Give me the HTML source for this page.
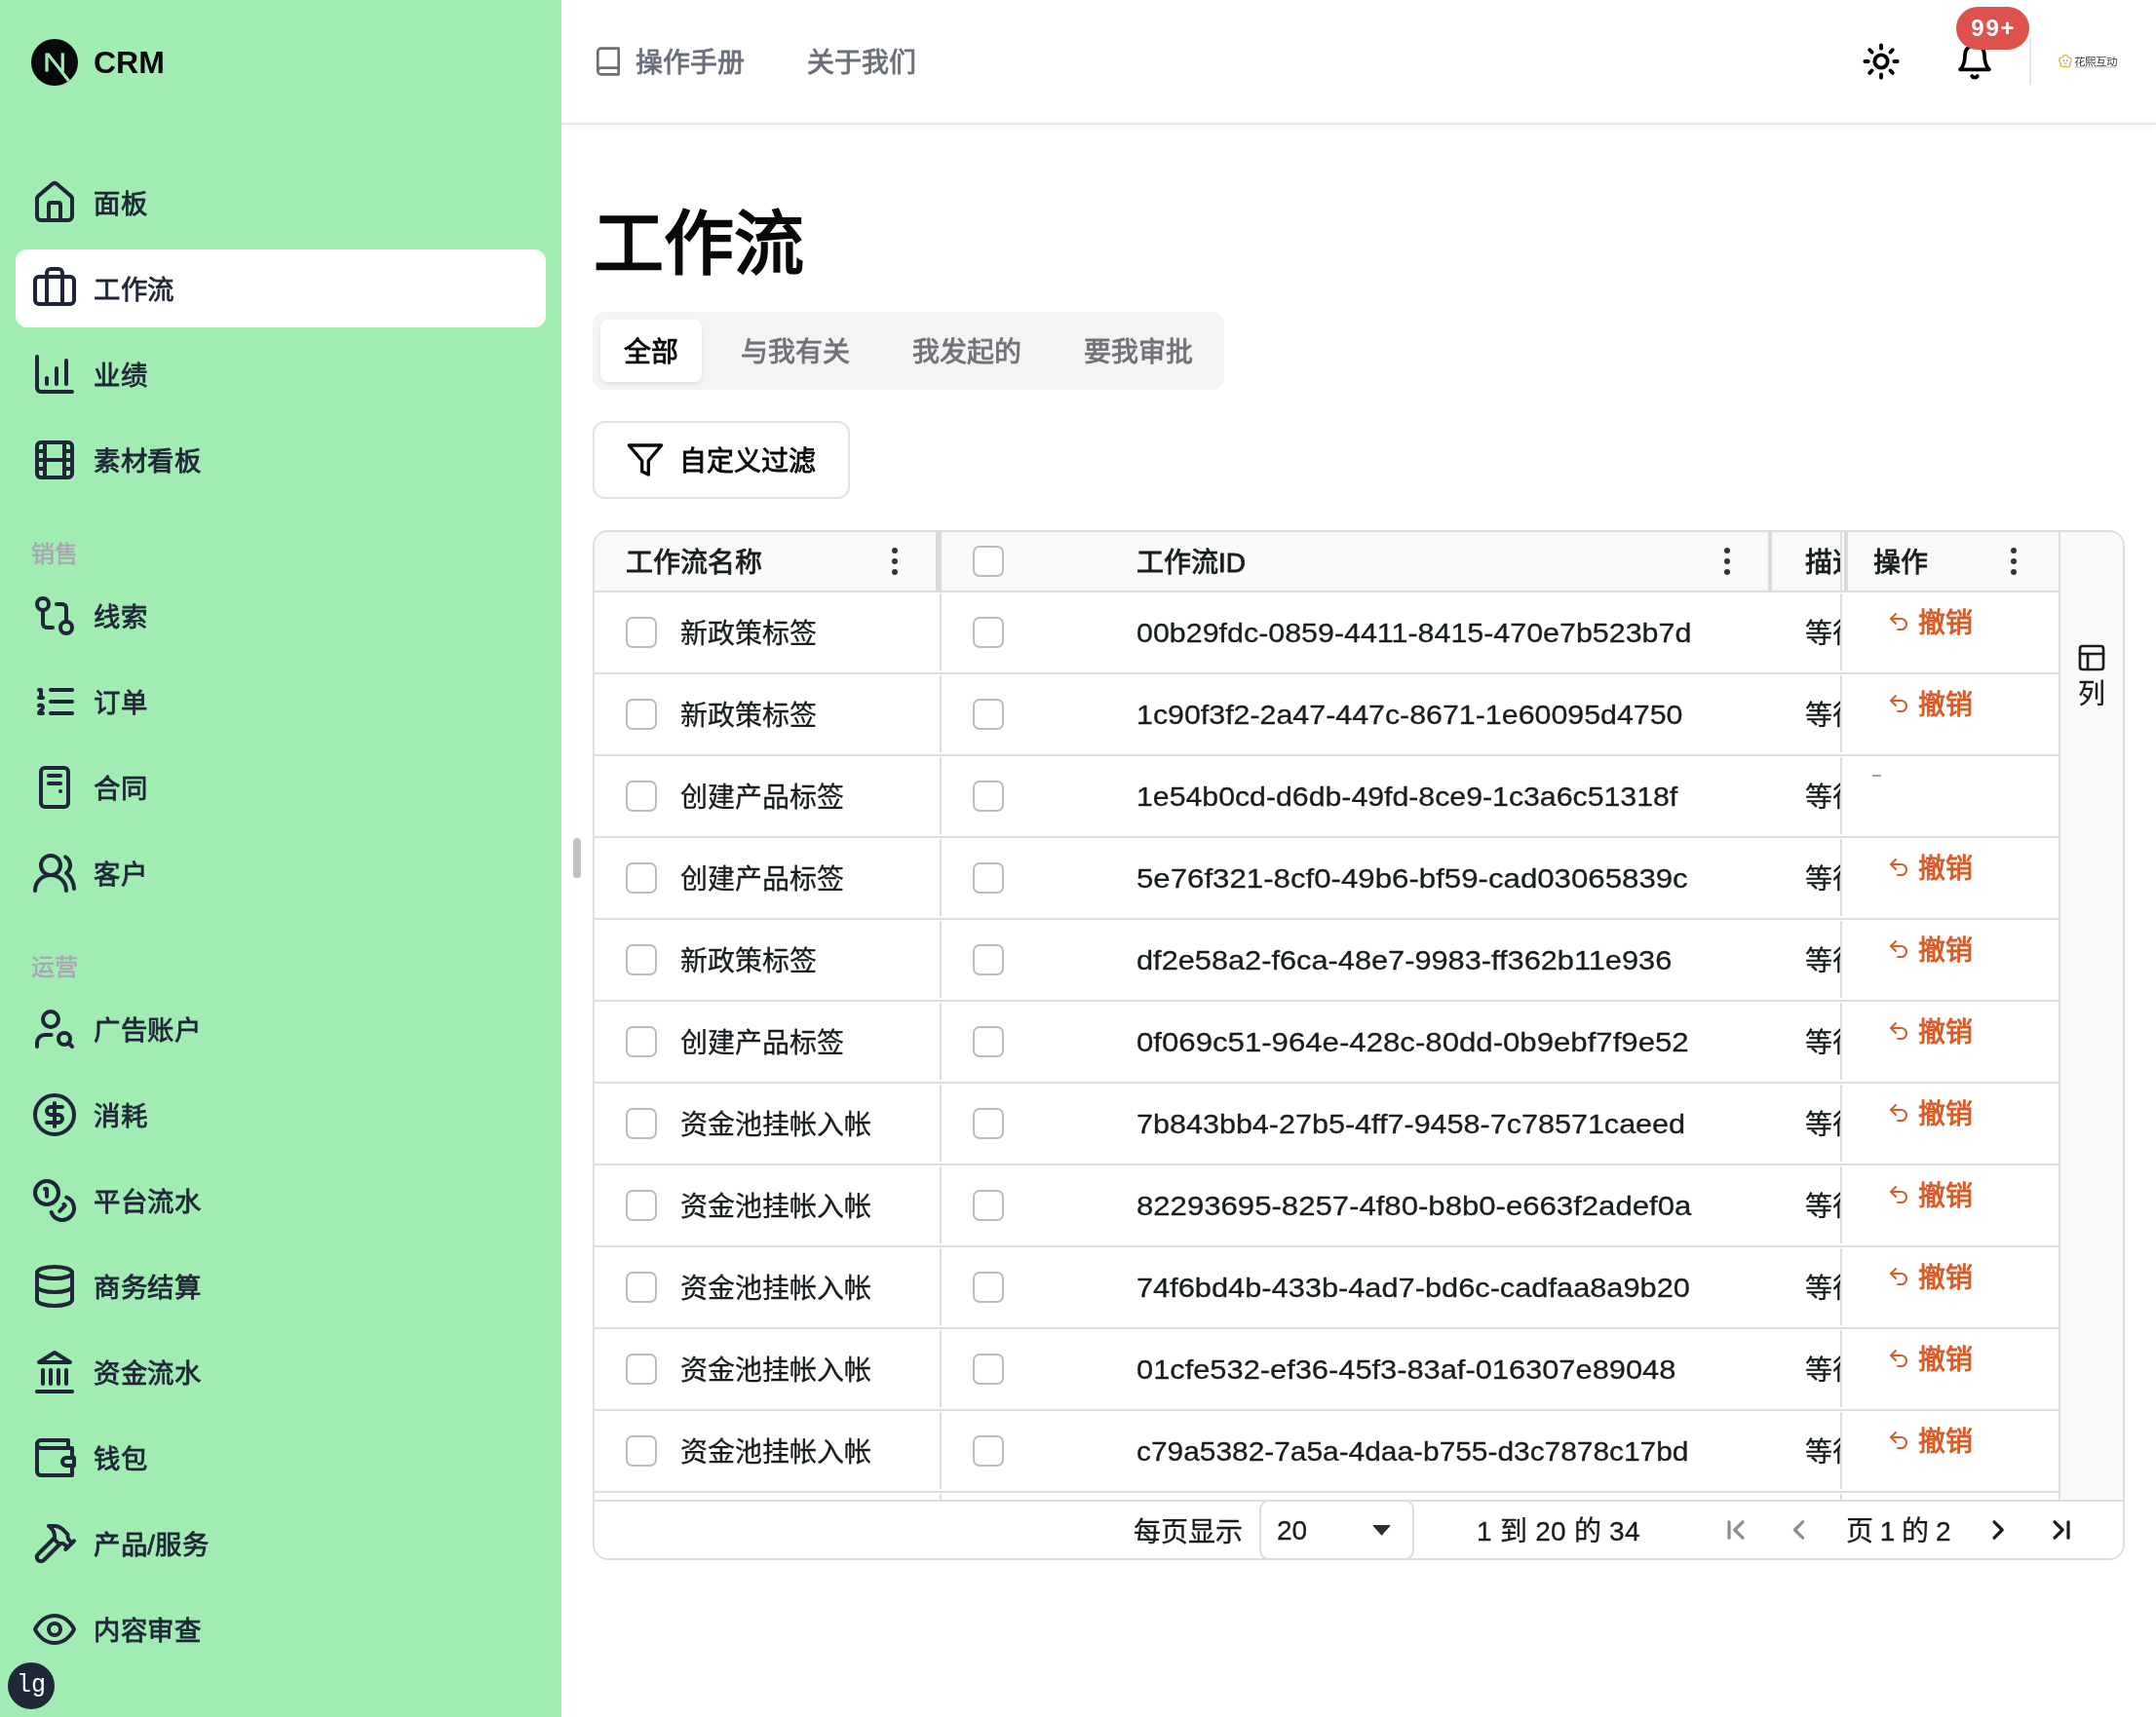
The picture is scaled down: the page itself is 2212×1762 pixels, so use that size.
<!DOCTYPE html>
<html lang="zh-CN">
<head>
<meta charset="utf-8">
<title>工作流 - CRM</title>
<style>
*{box-sizing:border-box}
html,body{margin:0;padding:0}
body{width:2212px;height:1762px;position:relative;overflow:hidden;background:#fff;
 font-family:"Liberation Sans",sans-serif;color:#181d1f;-webkit-font-smoothing:antialiased}
#root{position:absolute;left:0;top:0;width:2212px;height:1762px;will-change:transform}
.abs{position:absolute}
#side{position:absolute;left:0;top:0;width:576px;height:1762px;background:#a1ecb3;z-index:2}
.nav{position:absolute;left:16px;width:544px;height:80px;border-radius:12px;display:flex;align-items:center;
 padding-left:16px;color:#1f2637;font-size:28px;font-weight:500;line-height:40px}
.nav svg{flex:none;margin-right:16px}
.nav span{position:relative;top:2px;-webkit-text-stroke:.8px #1f2637;font-size:27.4px;letter-spacing:.6px}
.nav.on{background:#fff}
.grp{position:absolute;left:32px;font-size:24px;line-height:32px;color:#a9a5b5;font-weight:500;-webkit-text-stroke:.5px #a9a5b5}
#hdr{position:absolute;left:576px;top:0;width:1636px;height:128px;border-bottom:2px solid #e4e6ec;background:#fff;
 box-shadow:0 2px 4px rgba(0,0,0,.04)}
.hl{position:absolute;top:45px;-webkit-text-stroke:.8px #6b6f7b;height:40px;line-height:40px;font-size:28px;font-weight:500;color:#6b6f7b;white-space:nowrap}
h1{position:absolute;left:609px;top:202px;margin:0;font-size:72px;line-height:96px;font-weight:700;color:#09090b;letter-spacing:0;white-space:nowrap}
#tabs{position:absolute;left:608px;top:320px;width:648px;height:80px;background:#f4f4f5;border-radius:12px}
.tab{position:absolute;top:8px;height:64px;line-height:68px;-webkit-text-stroke:.8px currentColor;font-size:28px;font-weight:500;color:#71717a;text-align:center;white-space:nowrap;border-radius:8px}
.tab.on{background:#fff;color:#09090b;box-shadow:0 2px 4px rgba(0,0,0,.08)}
#fbtn{position:absolute;left:608px;top:432px;width:264px;height:80px;border:2px solid #e4e4e7;border-radius:12px;background:#fff;color:#09090b}
#fbtn svg{position:absolute;left:32px;top:18px}
#fbtn span{position:absolute;left:87px;top:20px;-webkit-text-stroke:.8px #09090b;line-height:40px;font-size:28px;font-weight:500;white-space:nowrap}
#grid{position:absolute;left:608px;top:544px;width:1572px;height:1057px;border:2px solid #dddddd;border-radius:16px;overflow:hidden;background:#fff}
/* inside grid coordinates: origin (610,546) */
.hd{position:absolute;top:0;height:60px;background:#fafafa}
.ht{position:absolute;top:12px;line-height:40px;font-size:28px;font-weight:400;color:#181d1f;white-space:nowrap;-webkit-text-stroke:.85px #181d1f}
.row{position:absolute;left:0;width:1502px;height:84px;border-bottom:2px solid #dddddd}
.cb{position:absolute;width:32px;height:32px;border:2px solid #bcbcbc;border-radius:7px;background:#fff}
.ct{position:absolute;line-height:40px;font-size:28px;white-space:nowrap;color:#181d1f;-webkit-text-stroke:.3px #181d1f}
.vline{position:absolute;width:2px;background:#dddddd}
.dots{position:absolute;width:8px}
.dots i{display:block;width:6.4px;height:6.4px;border-radius:50%;background:#2f3437;margin:0 0 4.6px 0}
.act{position:absolute;left:1330px;top:18px;color:#d95d28;font-size:28px;font-weight:700;line-height:40px;white-space:nowrap}
.act svg{position:absolute;left:-4px;top:0px}
.act span{position:absolute;left:28px;top:-6px}
</style>
</head>
<body>
<div id="root">
<div id="side">
<svg class="abs" style="left:32px;top:40px" width="48" height="48" viewBox="0 0 180 180">
<defs><linearGradient id="ng1" x1="109" y1="116.5" x2="144.5" y2="160.5" gradientUnits="userSpaceOnUse"><stop stop-color="#a1ecb3"/><stop offset="1" stop-color="#a1ecb3" stop-opacity="0"/></linearGradient>
<linearGradient id="ng2" x1="121" y1="54" x2="120.8" y2="106.9" gradientUnits="userSpaceOnUse"><stop stop-color="#a1ecb3"/><stop offset="1" stop-color="#a1ecb3" stop-opacity="0"/></linearGradient>
<clipPath id="nc"><circle cx="90" cy="90" r="90"/></clipPath></defs>
<circle cx="90" cy="90" r="90" fill="#09090b"/>
<g clip-path="url(#nc)"><path d="M149.508 157.52L69.142 54H54V125.97H66.1136V69.3836L139.999 164.845C143.333 162.614 146.509 160.165 149.508 157.52Z" fill="#a1ecb3"/>
<rect x="115" y="54" width="12" height="72" fill="#a1ecb3"/></g></svg>
<div class="abs" style="left:96px;top:44px;font-size:32px;line-height:40px;font-weight:700;color:#09090b">CRM</div>
<div class="nav" style="top:168px"><svg width="48" height="48" viewBox="0 0 24 24" fill="none" stroke="currentColor" stroke-width="2" stroke-linecap="round" stroke-linejoin="round" ><path d="M15 21v-8a1 1 0 0 0-1-1h-4a1 1 0 0 0-1 1v8"/><path d="M3 10a2 2 0 0 1 .709-1.528l7-5.999a2 2 0 0 1 2.582 0l7 5.999A2 2 0 0 1 21 10v9a2 2 0 0 1-2 2H5a2 2 0 0 1-2-2z"/></svg><span>面板</span></div>
<div class="nav on" style="top:256px"><svg width="48" height="48" viewBox="0 0 24 24" fill="none" stroke="currentColor" stroke-width="2" stroke-linecap="round" stroke-linejoin="round" ><path d="M16 20V4a2 2 0 0 0-2-2h-4a2 2 0 0 0-2 2v16"/><rect width="20" height="14" x="2" y="6" rx="2"/></svg><span>工作流</span></div>
<div class="nav" style="top:344px"><svg width="48" height="48" viewBox="0 0 24 24" fill="none" stroke="currentColor" stroke-width="2" stroke-linecap="round" stroke-linejoin="round" ><path d="M13 17V9"/><path d="M18 17V5"/><path d="M3 3v16a2 2 0 0 0 2 2h16"/><path d="M8 17v-3"/></svg><span>业绩</span></div>
<div class="nav" style="top:432px"><svg width="48" height="48" viewBox="0 0 24 24" fill="none" stroke="currentColor" stroke-width="2" stroke-linecap="round" stroke-linejoin="round" ><rect width="18" height="18" x="3" y="3" rx="2"/><path d="M7 3v18"/><path d="M3 7.5h4"/><path d="M3 12h18"/><path d="M3 16.5h4"/><path d="M17 3v18"/><path d="M17 7.5h4"/><path d="M17 16.5h4"/></svg><span>素材看板</span></div>
<div class="nav" style="top:592px"><svg width="48" height="48" viewBox="0 0 24 24" fill="none" stroke="currentColor" stroke-width="2" stroke-linecap="round" stroke-linejoin="round" ><circle cx="18" cy="18" r="3"/><circle cx="6" cy="6" r="3"/><path d="M13 6h3a2 2 0 0 1 2 2v7"/><path d="M11 18H8a2 2 0 0 1-2-2V9"/></svg><span>线索</span></div>
<div class="nav" style="top:680px"><svg width="48" height="48" viewBox="0 0 24 24" fill="none" stroke="currentColor" stroke-width="2" stroke-linecap="round" stroke-linejoin="round" ><line x1="10" x2="21" y1="6" y2="6"/><line x1="10" x2="21" y1="12" y2="12"/><line x1="10" x2="21" y1="18" y2="18"/><path d="M4 6h1v4"/><path d="M4 10h2"/><path d="M6 18H4c0-1 2-2 2-3s-1-1.5-2-1"/></svg><span>订单</span></div>
<div class="nav" style="top:768px"><svg width="48" height="48" viewBox="0 0 24 24" fill="none" stroke="currentColor" stroke-width="2" stroke-linecap="round" stroke-linejoin="round" ><rect width="14" height="20" x="5" y="2" rx="2"/><path d="M15 14h.01"/><path d="M9 6h6"/><path d="M9 10h6"/></svg><span>合同</span></div>
<div class="nav" style="top:856px"><svg width="48" height="48" viewBox="0 0 24 24" fill="none" stroke="currentColor" stroke-width="2" stroke-linecap="round" stroke-linejoin="round" ><path d="M18 21a8 8 0 0 0-16 0"/><circle cx="10" cy="8" r="5"/><path d="M22 20c0-3.37-2-6.5-4-8a5 5 0 0 0-.45-8.3"/></svg><span>客户</span></div>
<div class="nav" style="top:1016px"><svg width="48" height="48" viewBox="0 0 24 24" fill="none" stroke="currentColor" stroke-width="2" stroke-linecap="round" stroke-linejoin="round" ><circle cx="10" cy="7" r="4"/><path d="M10.3 15H7a4 4 0 0 0-4 4v2"/><circle cx="17" cy="17" r="3"/><path d="m21 21-1.9-1.9"/></svg><span>广告账户</span></div>
<div class="nav" style="top:1104px"><svg width="48" height="48" viewBox="0 0 24 24" fill="none" stroke="currentColor" stroke-width="2" stroke-linecap="round" stroke-linejoin="round" ><circle cx="12" cy="12" r="10"/><path d="M16 8h-6a2 2 0 1 0 0 4h4a2 2 0 1 1 0 4H8"/><path d="M12 18V6"/></svg><span>消耗</span></div>
<div class="nav" style="top:1192px"><svg width="48" height="48" viewBox="0 0 24 24" fill="none" stroke="currentColor" stroke-width="2" stroke-linecap="round" stroke-linejoin="round" ><circle cx="8" cy="8" r="6"/><path d="M18.09 10.37A6 6 0 1 1 10.34 18"/><path d="M7 6h1v4"/><path d="m16.71 13.88.7.71-2.82 2.82"/></svg><span>平台流水</span></div>
<div class="nav" style="top:1280px"><svg width="48" height="48" viewBox="0 0 24 24" fill="none" stroke="currentColor" stroke-width="2" stroke-linecap="round" stroke-linejoin="round" ><ellipse cx="12" cy="5" rx="9" ry="3"/><path d="M3 5V19A9 3 0 0 0 21 19V5"/><path d="M3 12A9 3 0 0 0 21 12"/></svg><span>商务结算</span></div>
<div class="nav" style="top:1368px"><svg width="48" height="48" viewBox="0 0 24 24" fill="none" stroke="currentColor" stroke-width="2" stroke-linecap="round" stroke-linejoin="round" ><line x1="3" x2="21" y1="22" y2="22"/><line x1="6" x2="6" y1="18" y2="11"/><line x1="10" x2="10" y1="18" y2="11"/><line x1="14" x2="14" y1="18" y2="11"/><line x1="18" x2="18" y1="18" y2="11"/><polygon points="12 2 20 7 4 7"/></svg><span>资金流水</span></div>
<div class="nav" style="top:1456px"><svg width="48" height="48" viewBox="0 0 24 24" fill="none" stroke="currentColor" stroke-width="2" stroke-linecap="round" stroke-linejoin="round" ><path d="M21 12V7H5a2 2 0 0 1 0-4h14v4"/><path d="M3 5v14a2 2 0 0 0 2 2h16v-5"/><path d="M18 12a2 2 0 0 0 0 4h4v-4Z"/></svg><span>钱包</span></div>
<div class="nav" style="top:1544px"><svg width="48" height="48" viewBox="0 0 24 24" fill="none" stroke="currentColor" stroke-width="2" stroke-linecap="round" stroke-linejoin="round" ><path d="m15 12-8.5 8.5c-.83.83-2.17.83-3 0 0 0 0 0 0 0a2.12 2.12 0 0 1 0-3L12 9"/><path d="M17.64 15 22 10.64"/><path d="m20.91 11.7-1.25-1.25c-.6-.6-.93-1.4-.93-2.25v-.86L16.01 4.6a5.56 5.56 0 0 0-3.94-1.64H9l.92.82A6.18 6.18 0 0 1 12 8.4v1.56l2 2h2.47l2.26 1.91"/></svg><span>产品/服务</span></div>
<div class="nav" style="top:1632px"><svg width="48" height="48" viewBox="0 0 24 24" fill="none" stroke="currentColor" stroke-width="2" stroke-linecap="round" stroke-linejoin="round" ><path d="M2 12s3-7 10-7 10 7 10 7-3 7-10 7-10-7-10-7Z"/><circle cx="12" cy="12" r="3"/></svg><span>内容审查</span></div>
<div class="grp" style="top:553px">销售</div>
<div class="grp" style="top:977px">运营</div>
<div class="abs" style="left:8px;top:1706px;width:48px;height:48px;border-radius:50%;background:#1f2738;color:#fff;font-family:'Liberation Mono',monospace;font-size:25px;line-height:48px;text-align:center">lg</div>
</div>
<div class="abs" style="left:588px;top:860px;width:8px;height:41px;border-radius:4px;background:#c1c1c1"></div>
<div id="hdr"></div>
<div class="abs" style="left:608px;top:47px;color:#6b6f7b"><svg width="32" height="32" viewBox="0 0 24 24" fill="none" stroke="currentColor" stroke-width="2" stroke-linecap="round" stroke-linejoin="round" ><path d="M4 19.5v-15A2.5 2.5 0 0 1 6.5 2H20v20H6.5a2.5 2.5 0 0 1 0-5H20"/></svg></div>
<div class="hl" style="left:652px">操作手册</div>
<div class="hl" style="left:828px">关于我们</div>
<div class="abs" style="left:1909.5px;top:43px;color:#000"><svg width="40" height="40" viewBox="0 0 24 24" fill="none" stroke="currentColor" stroke-width="2.3" stroke-linecap="round" stroke-linejoin="round" ><circle cx="12" cy="12" r="4"/><path d="M12 2v2"/><path d="M12 20v2"/><path d="m4.93 4.93 1.41 1.41"/><path d="m17.66 17.66 1.41 1.41"/><path d="M2 12h2"/><path d="M20 12h2"/><path d="m6.34 17.66-1.41 1.41"/><path d="m19.07 4.93-1.41 1.41"/></svg></div>
<div class="abs" style="left:2006px;top:43px;color:#000"><svg width="40" height="40" viewBox="0 0 24 24" fill="none" stroke="currentColor" stroke-width="2.2" stroke-linecap="round" stroke-linejoin="round" ><path d="M6 8a6 6 0 0 1 12 0c0 7 3 9 3 9H3s3-2 3-9"/><path d="M10.3 21a1.94 1.94 0 0 0 3.4 0"/></svg></div>
<div class="abs" style="left:2007px;top:7px;width:75px;height:44px;border-radius:22px;background:#de524e;color:#fff;font-size:24px;font-weight:700;line-height:44px;text-align:center;letter-spacing:1.8px;text-indent:1.8px">99+</div>
<div class="abs" style="left:2082px;top:39px;width:2px;height:48px;background:#e5e6ea"></div>
<svg class="abs" style="left:2110px;top:54px" width="64" height="18" viewBox="0 0 64 18">
<circle cx="9.00" cy="5.30" r="3.35" fill="#dcb534"/><circle cx="12.52" cy="7.86" r="3.35" fill="#dcb534"/><circle cx="11.17" cy="11.99" r="3.35" fill="#dcb534"/><circle cx="6.83" cy="11.99" r="3.35" fill="#dcb534"/><circle cx="5.48" cy="7.86" r="3.35" fill="#dcb534"/><circle cx="9.00" cy="5.50" r="2.300" fill="#fff"/><circle cx="12.33" cy="7.92" r="2.300" fill="#fff"/><circle cx="11.06" cy="11.83" r="2.300" fill="#fff"/><circle cx="6.94" cy="11.83" r="2.300" fill="#fff"/><circle cx="5.67" cy="7.92" r="2.300" fill="#fff"/><circle cx="9" cy="9" r="3.6" fill="#fff"/>
<circle cx="7.3" cy="8.200" r=".75" fill="#666"/><circle cx="10.7" cy="8.200" r=".75" fill="#666"/><rect x="7.700" y="10.6" width="2.600" height=".8" fill="#888"/>
<text x="18" y="12.6" font-family="Liberation Sans, sans-serif" font-size="10.5" fill="#3a3a3a" textLength="44" lengthAdjust="spacingAndGlyphs">花熙互动</text>
<rect x="18.5" y="14.5" width="43" height=".9" fill="#b5b5b5"/>
</svg>
<h1>工作流</h1>
<div id="tabs"><div class="tab on" style="left:8px;width:104px">全部</div><div class="tab" style="left:128px;width:160px">与我有关</div><div class="tab" style="left:304px;width:160px">我发起的</div><div class="tab" style="left:480px;width:160px">要我审批</div></div>
<div id="fbtn"><svg width="40" height="40" viewBox="0 0 24 24" fill="none" stroke="currentColor" stroke-width="2" stroke-linecap="round" stroke-linejoin="round" ><polygon points="22 3 2 3 10 12.46 10 19 14 21 14 12.46 22 3"/></svg><span>自定义过滤</span></div>
<div id="grid">
<div class="hd" style="left:0;width:1502px"></div>
<div class="abs" style="left:0;top:60px;width:1502px;height:2px;background:#dddddd"></div>
<div class="ht" style="left:32px">工作流名称</div>
<div class="ht" style="left:556px">工作流ID</div>
<div class="abs" style="left:1210px;top:0;width:68px;height:60px;overflow:hidden"><div class="ht" style="left:32px">描述</div></div>
<div class="ht" style="left:1312px">操作</div>
<div class="dots" style="left:304.8px;top:15.799999999999955px"><i></i><i></i><i></i></div>
<div class="dots" style="left:1158.8px;top:15.799999999999955px"><i></i><i></i><i></i></div>
<div class="dots" style="left:1452.8px;top:15.799999999999955px"><i></i><i></i><i></i></div>
<div class="cb" style="left:388px;top:14px"></div>
<div class="abs" style="left:350px;top:0;width:6px;height:60px;background:#d9dbdb"></div>
<div class="abs" style="left:1204px;top:0;width:4px;height:60px;background:#d9dbdb"></div>
<div class="abs" style="left:1278px;top:0;width:2px;height:60px;background:#e0e0e0"></div>
<div class="abs" style="left:1282px;top:0;width:4px;height:60px;background:#d9dbdb"></div>
<div class="row" style="top:62px"><div class="cb" style="left:32px;top:25px"></div><div class="ct" style="left:88px;top:23px">新政策标签</div><div class="cb" style="left:388px;top:25px"></div><div class="ct" style="left:556px;top:22px;transform-origin:0 50%;transform:scaleX(1.0861)">00b29fdc-0859-4411-8415-470e7b523b7d</div><div class="abs" style="left:1210px;top:0;width:68px;height:82px;overflow:hidden"><div class="ct" style="left:32px;top:23px">等待审批</div></div><div class="act"><svg width="24" height="24" viewBox="0 0 24 24" fill="none" stroke="currentColor" stroke-width="2.1" stroke-linecap="round" stroke-linejoin="round" ><path d="M9 14 4 9l5-5"/><path d="M4 9h10.5a5.5 5.5 0 0 1 5.5 5.5v0a5.5 5.5 0 0 1-5.5 5.5H11"/></svg><span>撤销</span></div></div>
<div class="row" style="top:146px"><div class="cb" style="left:32px;top:25px"></div><div class="ct" style="left:88px;top:23px">新政策标签</div><div class="cb" style="left:388px;top:25px"></div><div class="ct" style="left:556px;top:22px;transform-origin:0 50%;transform:scaleX(1.0844)">1c90f3f2-2a47-447c-8671-1e60095d4750</div><div class="abs" style="left:1210px;top:0;width:68px;height:82px;overflow:hidden"><div class="ct" style="left:32px;top:23px">等待审批</div></div><div class="act"><svg width="24" height="24" viewBox="0 0 24 24" fill="none" stroke="currentColor" stroke-width="2.1" stroke-linecap="round" stroke-linejoin="round" ><path d="M9 14 4 9l5-5"/><path d="M4 9h10.5a5.5 5.5 0 0 1 5.5 5.5v0a5.5 5.5 0 0 1-5.5 5.5H11"/></svg><span>撤销</span></div></div>
<div class="row" style="top:230px"><div class="cb" style="left:32px;top:25px"></div><div class="ct" style="left:88px;top:23px">创建产品标签</div><div class="cb" style="left:388px;top:25px"></div><div class="ct" style="left:556px;top:22px;transform-origin:0 50%;transform:scaleX(1.0807)">1e54b0cd-d6db-49fd-8ce9-1c3a6c51318f</div><div class="abs" style="left:1210px;top:0;width:68px;height:82px;overflow:hidden"><div class="ct" style="left:32px;top:23px">等待审批</div></div><div class="abs" style="left:1311px;top:19px;width:9px;height:2px;background:#9aa1b5"></div></div>
<div class="row" style="top:314px"><div class="cb" style="left:32px;top:25px"></div><div class="ct" style="left:88px;top:23px">创建产品标签</div><div class="cb" style="left:388px;top:25px"></div><div class="ct" style="left:556px;top:22px;transform-origin:0 50%;transform:scaleX(1.1147)">5e76f321-8cf0-49b6-bf59-cad03065839c</div><div class="abs" style="left:1210px;top:0;width:68px;height:82px;overflow:hidden"><div class="ct" style="left:32px;top:23px">等待审批</div></div><div class="act"><svg width="24" height="24" viewBox="0 0 24 24" fill="none" stroke="currentColor" stroke-width="2.1" stroke-linecap="round" stroke-linejoin="round" ><path d="M9 14 4 9l5-5"/><path d="M4 9h10.5a5.5 5.5 0 0 1 5.5 5.5v0a5.5 5.5 0 0 1-5.5 5.5H11"/></svg><span>撤销</span></div></div>
<div class="row" style="top:398px"><div class="cb" style="left:32px;top:25px"></div><div class="ct" style="left:88px;top:23px">新政策标签</div><div class="cb" style="left:388px;top:25px"></div><div class="ct" style="left:556px;top:22px;transform-origin:0 50%;transform:scaleX(1.0979)">df2e58a2-f6ca-48e7-9983-ff362b11e936</div><div class="abs" style="left:1210px;top:0;width:68px;height:82px;overflow:hidden"><div class="ct" style="left:32px;top:23px">等待审批</div></div><div class="act"><svg width="24" height="24" viewBox="0 0 24 24" fill="none" stroke="currentColor" stroke-width="2.1" stroke-linecap="round" stroke-linejoin="round" ><path d="M9 14 4 9l5-5"/><path d="M4 9h10.5a5.5 5.5 0 0 1 5.5 5.5v0a5.5 5.5 0 0 1-5.5 5.5H11"/></svg><span>撤销</span></div></div>
<div class="row" style="top:482px"><div class="cb" style="left:32px;top:25px"></div><div class="ct" style="left:88px;top:23px">创建产品标签</div><div class="cb" style="left:388px;top:25px"></div><div class="ct" style="left:556px;top:22px;transform-origin:0 50%;transform:scaleX(1.1131)">0f069c51-964e-428c-80dd-0b9ebf7f9e52</div><div class="abs" style="left:1210px;top:0;width:68px;height:82px;overflow:hidden"><div class="ct" style="left:32px;top:23px">等待审批</div></div><div class="act"><svg width="24" height="24" viewBox="0 0 24 24" fill="none" stroke="currentColor" stroke-width="2.1" stroke-linecap="round" stroke-linejoin="round" ><path d="M9 14 4 9l5-5"/><path d="M4 9h10.5a5.5 5.5 0 0 1 5.5 5.5v0a5.5 5.5 0 0 1-5.5 5.5H11"/></svg><span>撤销</span></div></div>
<div class="row" style="top:566px"><div class="cb" style="left:32px;top:25px"></div><div class="ct" style="left:88px;top:23px">资金池挂帐入帐</div><div class="cb" style="left:388px;top:25px"></div><div class="ct" style="left:556px;top:22px;transform-origin:0 50%;transform:scaleX(1.0904)">7b843bb4-27b5-4ff7-9458-7c78571caeed</div><div class="abs" style="left:1210px;top:0;width:68px;height:82px;overflow:hidden"><div class="ct" style="left:32px;top:23px">等待审批</div></div><div class="act"><svg width="24" height="24" viewBox="0 0 24 24" fill="none" stroke="currentColor" stroke-width="2.1" stroke-linecap="round" stroke-linejoin="round" ><path d="M9 14 4 9l5-5"/><path d="M4 9h10.5a5.5 5.5 0 0 1 5.5 5.5v0a5.5 5.5 0 0 1-5.5 5.5H11"/></svg><span>撤销</span></div></div>
<div class="row" style="top:650px"><div class="cb" style="left:32px;top:25px"></div><div class="ct" style="left:88px;top:23px">资金池挂帐入帐</div><div class="cb" style="left:388px;top:25px"></div><div class="ct" style="left:556px;top:22px;transform-origin:0 50%;transform:scaleX(1.1114)">82293695-8257-4f80-b8b0-e663f2adef0a</div><div class="abs" style="left:1210px;top:0;width:68px;height:82px;overflow:hidden"><div class="ct" style="left:32px;top:23px">等待审批</div></div><div class="act"><svg width="24" height="24" viewBox="0 0 24 24" fill="none" stroke="currentColor" stroke-width="2.1" stroke-linecap="round" stroke-linejoin="round" ><path d="M9 14 4 9l5-5"/><path d="M4 9h10.5a5.5 5.5 0 0 1 5.5 5.5v0a5.5 5.5 0 0 1-5.5 5.5H11"/></svg><span>撤销</span></div></div>
<div class="row" style="top:734px"><div class="cb" style="left:32px;top:25px"></div><div class="ct" style="left:88px;top:23px">资金池挂帐入帐</div><div class="cb" style="left:388px;top:25px"></div><div class="ct" style="left:556px;top:22px;transform-origin:0 50%;transform:scaleX(1.0987)">74f6bd4b-433b-4ad7-bd6c-cadfaa8a9b20</div><div class="abs" style="left:1210px;top:0;width:68px;height:82px;overflow:hidden"><div class="ct" style="left:32px;top:23px">等待审批</div></div><div class="act"><svg width="24" height="24" viewBox="0 0 24 24" fill="none" stroke="currentColor" stroke-width="2.1" stroke-linecap="round" stroke-linejoin="round" ><path d="M9 14 4 9l5-5"/><path d="M4 9h10.5a5.5 5.5 0 0 1 5.5 5.5v0a5.5 5.5 0 0 1-5.5 5.5H11"/></svg><span>撤销</span></div></div>
<div class="row" style="top:818px"><div class="cb" style="left:32px;top:25px"></div><div class="ct" style="left:88px;top:23px">资金池挂帐入帐</div><div class="cb" style="left:388px;top:25px"></div><div class="ct" style="left:556px;top:22px;transform-origin:0 50%;transform:scaleX(1.1003)">01cfe532-ef36-45f3-83af-016307e89048</div><div class="abs" style="left:1210px;top:0;width:68px;height:82px;overflow:hidden"><div class="ct" style="left:32px;top:23px">等待审批</div></div><div class="act"><svg width="24" height="24" viewBox="0 0 24 24" fill="none" stroke="currentColor" stroke-width="2.1" stroke-linecap="round" stroke-linejoin="round" ><path d="M9 14 4 9l5-5"/><path d="M4 9h10.5a5.5 5.5 0 0 1 5.5 5.5v0a5.5 5.5 0 0 1-5.5 5.5H11"/></svg><span>撤销</span></div></div>
<div class="row" style="top:902px"><div class="cb" style="left:32px;top:25px"></div><div class="ct" style="left:88px;top:23px">资金池挂帐入帐</div><div class="cb" style="left:388px;top:25px"></div><div class="ct" style="left:556px;top:22px;transform-origin:0 50%;transform:scaleX(1.067)">c79a5382-7a5a-4daa-b755-d3c7878c17bd</div><div class="abs" style="left:1210px;top:0;width:68px;height:82px;overflow:hidden"><div class="ct" style="left:32px;top:23px">等待审批</div></div><div class="act"><svg width="24" height="24" viewBox="0 0 24 24" fill="none" stroke="currentColor" stroke-width="2.1" stroke-linecap="round" stroke-linejoin="round" ><path d="M9 14 4 9l5-5"/><path d="M4 9h10.5a5.5 5.5 0 0 1 5.5 5.5v0a5.5 5.5 0 0 1-5.5 5.5H11"/></svg><span>撤销</span></div></div>
<div class="vline" style="left:354px;top:63px;height:79px"></div><div class="vline" style="left:1278px;top:63px;height:79px"></div>
<div class="vline" style="left:354px;top:147px;height:79px"></div><div class="vline" style="left:1278px;top:147px;height:79px"></div>
<div class="vline" style="left:354px;top:231px;height:79px"></div><div class="vline" style="left:1278px;top:231px;height:79px"></div>
<div class="vline" style="left:354px;top:315px;height:79px"></div><div class="vline" style="left:1278px;top:315px;height:79px"></div>
<div class="vline" style="left:354px;top:399px;height:79px"></div><div class="vline" style="left:1278px;top:399px;height:79px"></div>
<div class="vline" style="left:354px;top:483px;height:79px"></div><div class="vline" style="left:1278px;top:483px;height:79px"></div>
<div class="vline" style="left:354px;top:567px;height:79px"></div><div class="vline" style="left:1278px;top:567px;height:79px"></div>
<div class="vline" style="left:354px;top:651px;height:79px"></div><div class="vline" style="left:1278px;top:651px;height:79px"></div>
<div class="vline" style="left:354px;top:735px;height:79px"></div><div class="vline" style="left:1278px;top:735px;height:79px"></div>
<div class="vline" style="left:354px;top:819px;height:79px"></div><div class="vline" style="left:1278px;top:819px;height:79px"></div>
<div class="vline" style="left:354px;top:903px;height:79px"></div><div class="vline" style="left:1278px;top:903px;height:79px"></div>
<div class="vline" style="left:354px;top:987px;height:6px"></div><div class="vline" style="left:1278px;top:987px;height:6px"></div>
<div class="abs" style="left:1502px;top:0;width:66px;height:994px;background:#fafafa;border-left:2px solid #dddddd"></div>
<div class="abs" style="left:1520px;top:113px;color:#181d1f"><svg width="32" height="32" viewBox="0 0 24 24" fill="none" stroke="currentColor" stroke-width="2" stroke-linecap="round" stroke-linejoin="round" ><rect width="18" height="18" x="3" y="3" rx="2"/><path d="M3 9h18"/><path d="M9 21V9"/></svg></div>
<div class="ct" style="left:1522px;top:147px">列</div>
<div class="abs" style="left:0;top:993px;width:1568px;height:61px;background:#fff;border-top:2px solid #dddddd"></div>
<div class="ct" style="left:553px;top:1006.5px">每页显示</div>
<div class="abs" style="left:682px;top:993px;width:159px;height:62px;border:2px solid #dddddd;border-radius:10px;background:#fff"></div>
<div class="ct" style="left:700px;top:1005px">20</div>
<svg class="abs" style="left:798px;top:1018px" width="19" height="12" viewBox="0 0 19 12"><path d="M1.2 1h16.6a.6.6 0 0 1 .45 1L10 11.200a.7.7 0 0 1-1 0L.75 2a.6.6 0 0 1 .45-1z" fill="#2b2f33"/></svg>
<div class="ct" style="left:905px;top:1005.5px;letter-spacing:.25px">1 到 20 的 34</div>
<div class="ct" style="left:1284px;top:1005.5px;letter-spacing:-.5px">页 1 的 2</div>
<svg class="abs" style="left:1155px;top:1008px" width="32" height="32" viewBox="0 0 32 32" fill="none" stroke="#8b8e8f" stroke-width="3.2" stroke-linecap="round" stroke-linejoin="round"><path d="M9 7.800v16.400"/><path d="M23 7.800l-8.200 8.200 8.200 8.200"/></svg>
<svg class="abs" style="left:1220px;top:1008px" width="32" height="32" viewBox="0 0 32 32" fill="none" stroke="#8b8e8f" stroke-width="3.2" stroke-linecap="round" stroke-linejoin="round"><path d="M19.600 7.800l-8.200 8.200 8.200 8.200"/></svg>
<svg class="abs" style="left:1424px;top:1008px" width="32" height="32" viewBox="0 0 32 32" fill="none" stroke="#181d1f" stroke-width="3.2" stroke-linecap="round" stroke-linejoin="round"><path d="M12 7.800l8.200 8.200-8.200 8.200"/></svg>
<svg class="abs" style="left:1489px;top:1008px" width="32" height="32" viewBox="0 0 32 32" fill="none" stroke="#181d1f" stroke-width="3.2" stroke-linecap="round" stroke-linejoin="round"><path d="M9 7.800l8.200 8.200-8.200 8.200"/><path d="M23 7.800v16.400"/></svg>
</div>
</div>
</body>
</html>
